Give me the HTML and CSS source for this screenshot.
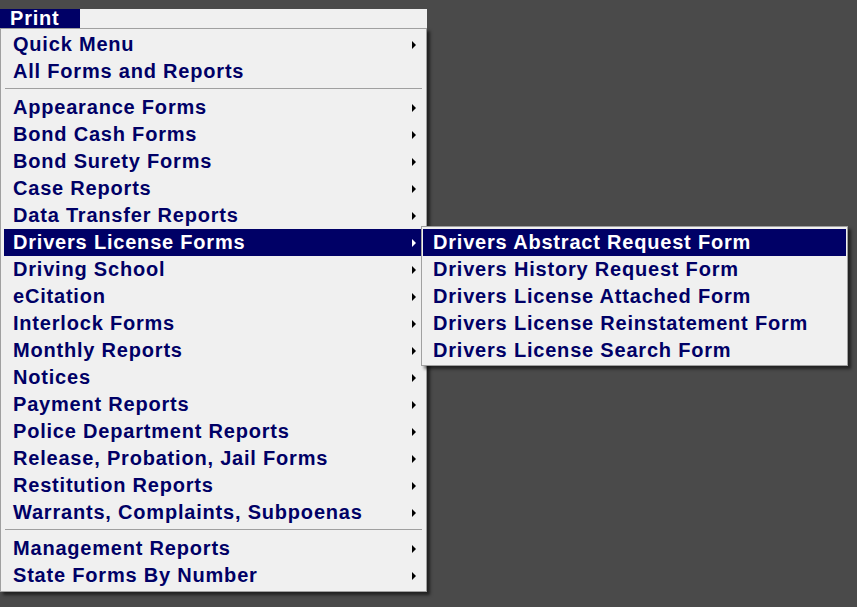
FILE: index.html
```html
<!DOCTYPE html>
<html>
<head>
<meta charset="utf-8">
<link rel="stylesheet" href="styles.css">
</head>
<body>
<div class="app">
  <div class="menubar">
    <div class="tab">Print</div>
  </div>
  <div class="menu">
    <div class="item sub">Quick Menu</div>
    <div class="item">All Forms and Reports</div>
    <div class="sep"></div>
    <div class="item sub">Appearance Forms</div>
    <div class="item sub">Bond Cash Forms</div>
    <div class="item sub">Bond Surety Forms</div>
    <div class="item sub">Case Reports</div>
    <div class="item sub">Data Transfer Reports</div>
    <div class="item sub active">Drivers License Forms</div>
    <div class="item sub">Driving School</div>
    <div class="item sub">eCitation</div>
    <div class="item sub">Interlock Forms</div>
    <div class="item sub">Monthly Reports</div>
    <div class="item sub">Notices</div>
    <div class="item sub">Payment Reports</div>
    <div class="item sub">Police Department Reports</div>
    <div class="item sub">Release, Probation, Jail Forms</div>
    <div class="item sub">Restitution Reports</div>
    <div class="item sub">Warrants, Complaints, Subpoenas</div>
    <div class="sep"></div>
    <div class="item sub">Management Reports</div>
    <div class="item sub">State Forms By Number</div>
  </div>
  <div class="submenu">
    <div class="sitem active">Drivers Abstract Request Form</div>
    <div class="sitem">Drivers History Request Form</div>
    <div class="sitem">Drivers License Attached Form</div>
    <div class="sitem">Drivers License Reinstatement Form</div>
    <div class="sitem">Drivers License Search Form</div>
  </div>
</div>
</body>
</html>
```

FILE: styles.css
```css
html, body {
  margin: 0;
  padding: 0;
}
body {
  background: #4a4a4a;
  font-family: "Liberation Sans", Arial, sans-serif;
  font-weight: bold;
  font-size: 20px;
  letter-spacing: 0.8px;
  color: #000066;
  width: 857px;
  height: 607px;
  overflow: hidden;
}
.app {
  position: relative;
  padding-top: 9px;
}
.menubar {
  width: 427px;
  height: 19px;
  background: #f0f0f0;
  display: flex;
}
.tab {
  width: 80px;
  box-sizing: border-box;
  padding-left: 10px;
  background: #000066;
  color: #ffffff;
  line-height: 19px;
  height: 19px;
}
.menu {
  width: 427px;
  box-sizing: border-box;
  border: 1px solid #a0a0a0;
  background: #f0f0f0;
  padding: 2px 4px 2px 3px;
  box-shadow: 3px 3px 3px rgba(0, 0, 0, 0.55);
}
.item {
  position: relative;
  height: 27px;
  line-height: 27px;
  padding-left: 9px;
  white-space: nowrap;
}
.item.sub::after {
  content: "";
  position: absolute;
  right: 6px;
  top: 10px;
  width: 0;
  height: 0;
  border-left: 4px solid #000000;
  border-top: 4px solid transparent;
  border-bottom: 4px solid transparent;
}
.item.active {
  background: #000066;
  color: #ffffff;
}
.item.active::after {
  border-left-color: #ffffff;
}
.sep {
  height: 1px;
  background: #a0a0a0;
  margin: 3px 0 5px 1px;
}
.submenu {
  position: absolute;
  left: 421px;
  top: 226px;
  width: 427px;
  box-sizing: border-box;
  border: 1px solid #a0a0a0;
  background: #f0f0f0;
  padding: 2px 1px 1px 1px;
  box-shadow: 3px 3px 3px rgba(0, 0, 0, 0.55);
}
.sitem {
  height: 27px;
  line-height: 27px;
  padding-left: 10px;
  white-space: nowrap;
}
.sitem.active {
  background: #000066;
  color: #ffffff;
}
```
